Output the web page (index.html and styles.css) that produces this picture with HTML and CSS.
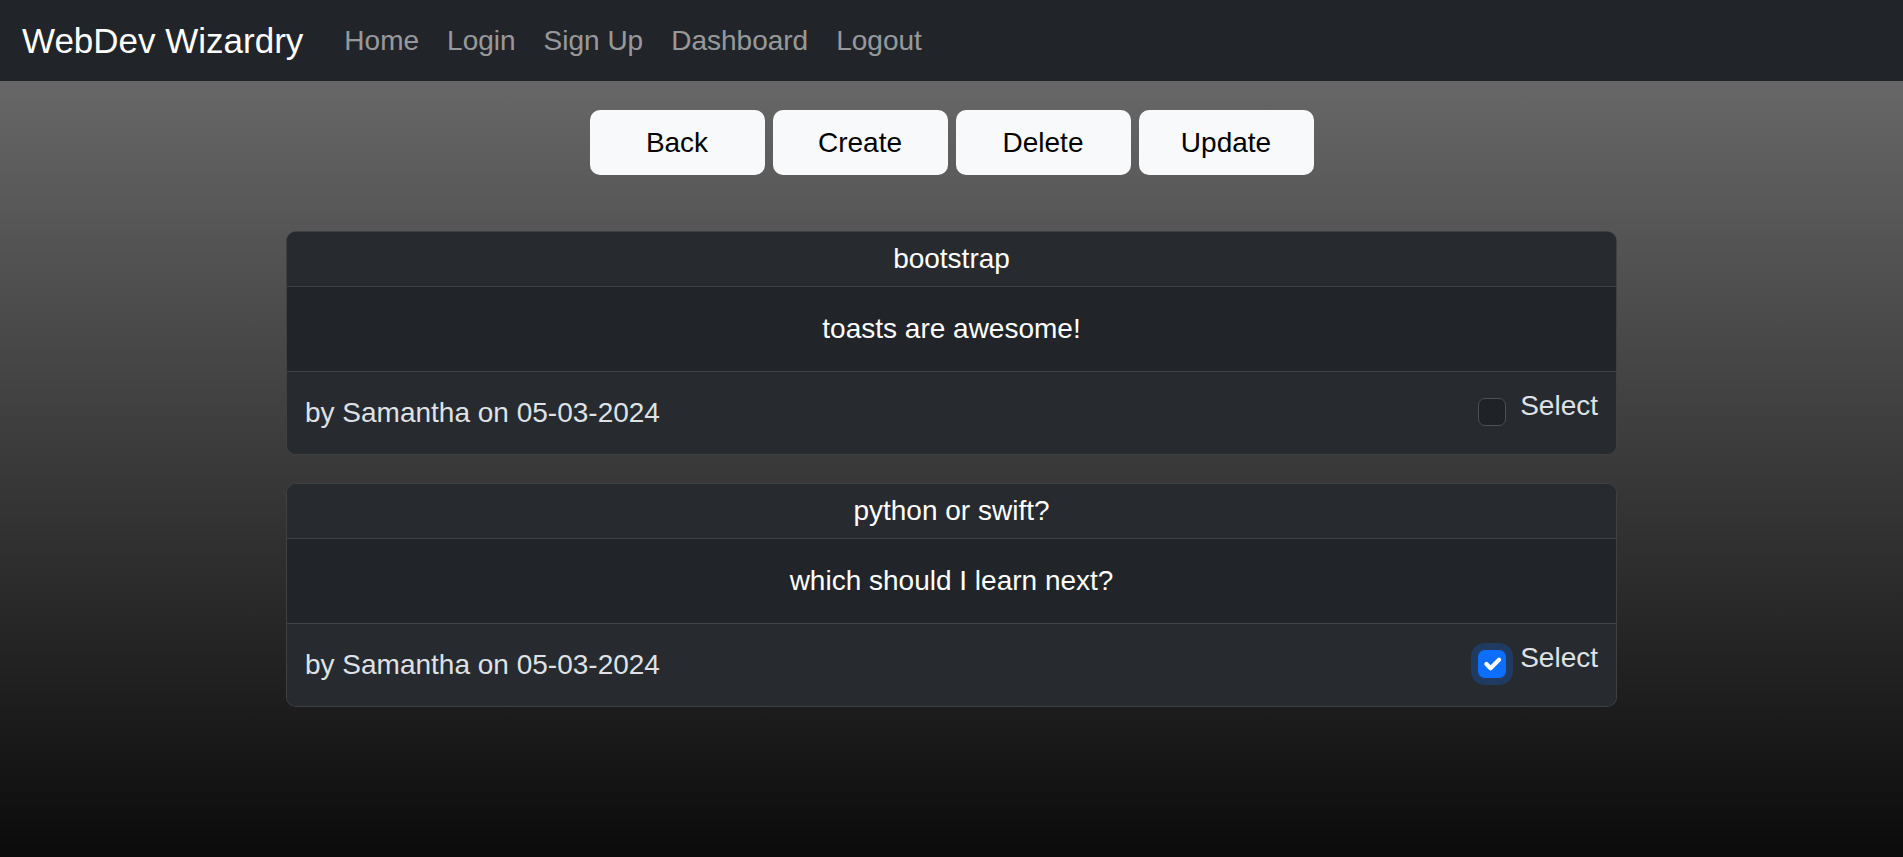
FILE: index.html
```html
<!DOCTYPE html>
<html lang="en">
<head>
<meta charset="utf-8">
<title>WebDev Wizardry</title>
<link rel="stylesheet" href="styles.css">
</head>
<body>
<nav class="navbar">
  <a class="brand" href="#">WebDev Wizardry</a>
  <a class="nav-link" href="#">Home</a>
  <a class="nav-link" href="#">Login</a>
  <a class="nav-link" href="#">Sign Up</a>
  <a class="nav-link" href="#">Dashboard</a>
  <a class="nav-link" href="#">Logout</a>
</nav>
<main class="main">
  <div class="actions">
    <button class="btn">Back</button>
    <button class="btn">Create</button>
    <button class="btn">Delete</button>
    <button class="btn">Update</button>
  </div>
  <div class="cards">
    <div class="card">
      <div class="card-header">bootstrap</div>
      <div class="card-body">toasts are awesome!</div>
      <div class="card-footer">
        <span class="meta">by Samantha on 05-03-2024</span>
        <label class="check">
          <span class="box"></span>
          <span class="check-label">Select</span>
        </label>
      </div>
    </div>
    <div class="card">
      <div class="card-header">python or swift?</div>
      <div class="card-body">which should I learn next?</div>
      <div class="card-footer">
        <span class="meta">by Samantha on 05-03-2024</span>
        <label class="check">
          <span class="box checked"><svg viewBox="0 0 20 20" width="28" height="28"><path d="m6 10 3 3 6-6" fill="none" stroke="#fff" stroke-width="3" stroke-linecap="round" stroke-linejoin="round"/></svg></span>
          <span class="check-label">Select</span>
        </label>
      </div>
    </div>
  </div>
</main>
</body>
</html>
```
FILE: styles.css
```css
html, body {
  margin: 0;
  padding: 0;
}
body {
  font-family: "Liberation Sans", Arial, Helvetica, sans-serif;
  background: #0b0b0b;
  height: 100vh;
  overflow: hidden;
  display: flex;
  flex-direction: column;
}
.navbar {
  height: 81px;
  background: #212529;
  display: flex;
  align-items: center;
  padding-left: 22px;
  flex: 0 0 auto;
}
.brand {
  font-size: 35px;
  color: #fff;
  text-decoration: none;
  margin-right: 27px;
  line-height: 1;
}
.nav-link {
  font-size: 28px;
  color: rgba(255, 255, 255, 0.55);
  text-decoration: none;
  padding: 0 14px;
  line-height: 1;
}
.main {
  flex: 1 1 auto;
  background: linear-gradient(to bottom, #676767 0%, #0b0b0b 100%);
  display: flex;
  flex-direction: column;
  align-items: center;
  padding-top: 29px;
}
.actions {
  display: flex;
  gap: 8px;
}
.btn {
  width: 175px;
  height: 65px;
  border: none;
  border-radius: 10px;
  background: #f8f9fa;
  color: #000;
  font-family: "Liberation Sans", Arial, sans-serif;
  font-size: 28px;
  padding: 0;
  cursor: pointer;
}
.cards {
  width: 1331px;
  margin-top: 56px;
  display: flex;
  flex-direction: column;
  gap: 28px;
}
.card {
  border: 1px solid rgba(255, 255, 255, 0.13);
  border-radius: 10px;
  overflow: hidden;
  background: #212529;
  font-size: 28px;
}
.card-header {
  background: #272a2e;
  color: #fff;
  text-align: center;
  padding: 7px 18px;
  line-height: 40px;
  border-bottom: 1px solid #3f4347;
}
.card-body {
  color: #fff;
  text-align: center;
  padding: 22px 18px;
  line-height: 40px;
  border-bottom: 1px solid #3f4347;
}
.card-footer {
  background: #272a2e;
  color: #dee2e6;
  padding: 20px 18px 21px;
  line-height: 41px;
  display: flex;
  justify-content: space-between;
  align-items: flex-start;
}
.check {
  display: flex;
  align-items: flex-start;
  margin-top: -7px;
}
.box {
  width: 26px;
  height: 26px;
  margin-top: 13px;
  border: 1px solid #4b5056;
  border-radius: 7px;
  background: #1f2226;
  display: flex;
  align-items: center;
  justify-content: center;
  overflow: hidden;
}
.box.checked {
  width: 28px;
  height: 28px;
  border: none;
  background: #0d6efd;
  box-shadow: 0 0 0 7px rgba(13, 110, 253, 0.25);
}
.box svg {
  display: block;
}
.check-label {
  margin-left: 14px;
  color: #dee2e6;
}
```
